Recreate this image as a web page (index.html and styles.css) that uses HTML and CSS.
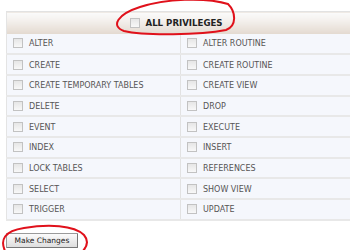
FILE: index.html
```html
<!DOCTYPE html>
<html lang="en">
<head>
    <meta charset="UTF-8">
    <title>Privileges</title>
    <link rel="stylesheet" href="styles.css">
</head>
<body>
    <main class="page">
        <table class="privs">
            <thead>
                <tr>
                    <th colspan="2"><span class="chk"></span>ALL PRIVILEGES</th>
                </tr>
            </thead>
            <tbody>
                <tr><td><span class="chk"></span>ALTER</td><td><span class="chk"></span>ALTER ROUTINE</td></tr>
                <tr><td><span class="chk"></span>CREATE</td><td><span class="chk"></span>CREATE ROUTINE</td></tr>
                <tr><td><span class="chk"></span>CREATE TEMPORARY TABLES</td><td><span class="chk"></span>CREATE VIEW</td></tr>
                <tr><td><span class="chk"></span>DELETE</td><td><span class="chk"></span>DROP</td></tr>
                <tr><td><span class="chk"></span>EVENT</td><td><span class="chk"></span>EXECUTE</td></tr>
                <tr><td><span class="chk"></span>INDEX</td><td><span class="chk"></span>INSERT</td></tr>
                <tr><td><span class="chk"></span>LOCK TABLES</td><td><span class="chk"></span>REFERENCES</td></tr>
                <tr><td><span class="chk"></span>SELECT</td><td><span class="chk"></span>SHOW VIEW</td></tr>
                <tr><td><span class="chk"></span>TRIGGER</td><td><span class="chk"></span>UPDATE</td></tr>
            </tbody>
        </table>
        <button class="make-btn">Make Changes</button>
    </main>

    <!-- hand drawn red marks over the shot -->
    <svg class="marks" width="350" height="250" viewBox="0 0 350 250">
        <path d="M228,4 C205,-3 165,-1 140,7 C118,14 110,26 124,31 C145,36 200,35 226,30 C237,26 236,12 228,4" />
        <path d="M5,251 C0,240 4,231 24,228 C48,224 74,225 84,235 C89,241 87,247 82,252" />
    </svg>
</body>
</html>
```
FILE: styles.css
```css
* {
    margin: 0;
    padding: 0;
    box-sizing: border-box;
}

body {
    background: #fff;
    font-family: "DejaVu Sans", Verdana, sans-serif;
    width: 350px;
    height: 250px;
    overflow: hidden;
}

.page {
    padding: 11px 0 0 6px;
}

.privs {
    width: 360px;
    border-collapse: collapse;
    border-top: 1px solid #e2e2e2;
    border-left: 1px solid #e4e4e4;
}

.privs th {
    height: 22px;
    font-size: 8.6px;
    font-weight: bold;
    color: #222;
    text-align: center;
    padding-right: 20px;
    background: linear-gradient(#fbfbfb 0%, #f4f1ee 35%, #e3d9cf 100%);
}

.privs td {
    height: 20.7px;
    font-size: 8px;
    color: #555;
    background: #f5f7fc;
    border-bottom: 2px solid #e8e8e8;
    padding: 0 0 0 6px;
    white-space: nowrap;
}

.privs td:first-child {
    width: 174px;
    border-right: 1px solid #e2e2e2;
}

.chk {
    display: inline-block;
    width: 10px;
    height: 10px;
    margin-right: 6px;
    vertical-align: -2px;
    border: 1px solid #c2c2c2;
    background: linear-gradient(#e6e6e6, #f8f8f8);
}

.privs th .chk {
    margin-right: 5px;
}

.make-btn {
    margin-top: 12px;
    width: 72px;
    height: 15px;
    font-family: "DejaVu Sans", Tahoma, sans-serif;
    font-size: 7.5px;
    color: #222;
    border: 1px solid #9a9a9a;
    border-right-color: #777;
    border-bottom-color: #777;
    border-radius: 1px;
    background: linear-gradient(#fbfbfb, #dedede);
}

.marks {
    position: absolute;
    top: 0;
    left: 0;
    pointer-events: none;
}

.marks path {
    fill: none;
    stroke: #e0111b;
    stroke-width: 2;
    stroke-linecap: round;
}
```
